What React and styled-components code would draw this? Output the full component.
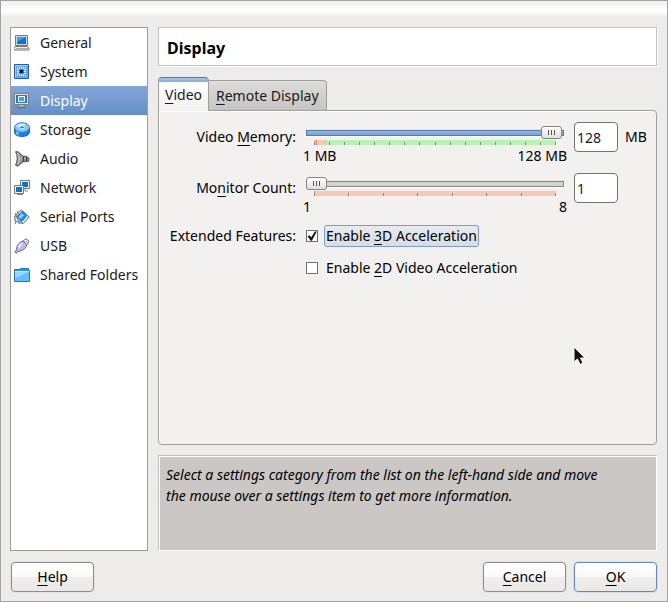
import React, { useState } from 'react';
import styled, { createGlobalStyle } from 'styled-components';

const GlobalStyle = createGlobalStyle`
  *, *::before, *::after { box-sizing: border-box; }
  body { margin: 0; background: #edecea; }
  body, button, input { font: 14px/20px "Noto Sans", "Open Sans", sans-serif; color: #1a1a1a; }
  button { padding: 0; cursor: default; }
`;

const Window = styled.main`
  display: flex;
  flex-direction: column;
  gap: 11px;
  min-height: 100vh;
  padding: 26px 10px 9px 9px;
  border: 1px solid #a3a3a3;
  background: linear-gradient(#f0f0f0, #ffffff 10px, #edecea 16px);
`;

const Body = styled.div`
  flex: 1;
  display: grid;
  grid-template-columns: 138px minmax(0, 1fr);
  gap: 10px;
`;

const Sidebar = styled.nav`
  border: 1px solid #9d9c9a;
  background: #fff;
`;

const Category = styled.button`
  display: flex;
  align-items: center;
  gap: 10px;
  width: 100%;
  height: 29px;
  padding-left: 3px;
  border: 0;
  white-space: nowrap;
  text-align: left;
  color: ${(p) => (p.$active ? '#fff' : '#1a1a1a')};
  background: ${(p) => (p.$active ? 'linear-gradient(#84a6d8, #648fc6)' : 'none')};
`;

const Icon = styled.svg`
  flex: none;
  width: 16px;
  height: 16px;
`;

const Content = styled.div`
  display: flex;
  flex-direction: column;
`;

const Title = styled.h1`
  margin: 0 0 11px;
  padding: 9px 8px 6px;
  border: 1px solid #c2c1c0;
  box-shadow: 1px 1px #fff;
  background: #fff;
  font-size: 16px;
  line-height: 22px;
  color: #000;
`;

const TabList = styled.div`
  display: flex;
  align-items: flex-end;
  height: 33px;
`;

const Tab = styled.button`
  position: relative;
  z-index: ${(p) => (p.$active ? 1 : 0)};
  height: ${(p) => (p.$active ? 34 : 31)}px;
  margin-bottom: -1px;
  padding: 0 ${(p) => (p.$active ? 6 : 7)}px;
  border: 1px solid #a09f9d;
  border-width: ${(p) => (p.$active ? '1px 1px 0' : '1px 1px 1px 0')};
  border-color: ${(p) => (p.$active ? '#5578a5 #a09f9d' : '#a09f9d')};
  border-radius: ${(p) => (p.$active ? '4px 4px 0 0' : '0 4px 0 0')};
  background: ${(p) =>
    p.$active
      ? 'linear-gradient(#a2c1ed 0 1px, #83a7d8 4px, #ffffff 4px, #f2f1ef)'
      : 'linear-gradient(#deddda, #c5c4c1)'};
`;

const Panel = styled.section`
  position: relative;
  flex: 1;
  display: flex;
  flex-direction: column;
  align-items: stretch;
  gap: 10px;
  padding: 11px 9px;
  border: 1px solid #a09f9d;
  border-radius: 0 4px 4px 4px;
  box-shadow: inset 1px 1px #fff;
  background: #f2f1ef;
`;

const SettingRow = styled.div`
  display: grid;
  grid-template-columns: 128px minmax(0, 1fr) 44px 19px;
  gap: 10px;
  height: 41px;
`;

const RowLabel = styled.label`
  padding-top: 5px;
  text-align: right;
  white-space: nowrap;
  color: #000;
`;

const SliderBlock = styled.div`
  display: flex;
  flex-direction: column;
  padding-top: 4px;
`;

const Range = styled.input`
  appearance: none;
  display: block;
  width: 100%;
  height: 14px;
  margin: 0;
  background: none;
  outline: none;

  &::-webkit-slider-runnable-track {
    height: 6px;
    border: 1px solid ${(p) => (p.$filled ? '#587aa5' : '#888884')};
    box-shadow: 0 1px #fff, 0 -1px #e5e4e1;
    background: ${(p) => (p.$filled ? 'linear-gradient(#97b8e6, #789fd2)' : '#d3d3cf')};
  }

  &::-webkit-slider-thumb {
    appearance: none;
    width: 21px;
    height: 13px;
    margin: -5px -1px 0;
    border: 1px solid #858481;
    border-radius: 3px;
    background:
      linear-gradient(#555, #555) 6px 3px / 1px 5px no-repeat,
      linear-gradient(#555, #555) 9px 3px / 1px 5px no-repeat,
      linear-gradient(#555, #555) 12px 3px / 1px 5px no-repeat,
      linear-gradient(#ffffff, #e1e0de);
  }
`;

const Scale = styled.svg`
  display: block;
  flex: none;
  width: calc(100% - 16px);
  height: 5px;
  margin: 0 8px 1px;
  shape-rendering: crispEdges;
`;

const Bounds = styled.div`
  display: flex;
  justify-content: space-between;
  margin: 0 -3px;
  white-space: nowrap;
  color: #000;
`;

const NumberField = styled.input`
  width: 100%;
  height: 30px;
  padding: 0 2px;
  border: 1px solid #737270;
  border-radius: 4px;
  background: #fff;
  outline: none;
`;

const Unit = styled.span`
  margin-left: -3px;
  padding-top: 5px;
  color: #000;
`;

const Features = styled.fieldset`
  display: grid;
  grid-template-columns: 128px minmax(0, 1fr);
  gap: 10px;
  margin: 2px 0 0;
  padding: 0;
  border: 0;
`;

const FeatureName = styled.span`
  text-align: right;
  white-space: nowrap;
  color: #000;
`;

const FeatureList = styled.div`
  display: flex;
  flex-direction: column;
  align-items: flex-start;
  gap: 12px;
`;

const Feature = styled.label`
  display: flex;
  align-items: center;
  gap: 7px;
  height: 20px;
  color: #000;
`;

const Checkbox = styled.input`
  appearance: none;
  display: grid;
  width: 12px;
  height: 12px;
  margin: 0;
  border: 1px solid #6f6e6c;
  background: #fff;
  outline: none;

  &:checked::before {
    content: '';
    background: #1c1c1c;
    clip-path: polygon(5% 52%, 26% 42%, 42% 63%, 78% 5%, 98% 5%, 49% 98%, 36% 98%);
  }
`;

const FeatureText = styled.span`
  padding: 0 1px;
  border-radius: 2px;
  box-shadow: ${(p) => (p.$focused ? '0 0 0 1px #7e9bc2' : 'none')};
  background: ${(p) => (p.$focused ? 'linear-gradient(#e7ebf1, #d5dde7)' : 'none')};
`;

const Hint = styled.p`
  min-height: 96px;
  margin: 10px 0 0;
  padding: 8px 44px 8px 7px;
  border: 1px solid #c0bfbd;
  border-right-color: #fff;
  border-bottom-color: #fff;
  box-shadow: inset 1px 1px #fff;
  background: #cbc7c4;
  font-style: italic;
  line-height: 21px;
  color: #000;
`;

const Footer = styled.footer`
  display: flex;
  gap: 8px;
  padding-left: 1px;
`;

const DialogButton = styled.button`
  width: 83px;
  height: 30px;
  margin-right: ${(p) => (p.$start ? 'auto' : 0)};
  border: 1px solid ${(p) => (p.$primary ? '#648abd' : '#8c8b88')};
  border-radius: 4px;
  box-shadow: 0 0 0 1px ${(p) => (p.$primary ? '#d5dfec' : '#e4e3e1')};
  background: linear-gradient(#ffffff, #f8f8f7 50%, #f0efee 51%, #e9e8e6);
  color: #000;
`;

const Mnemonic = styled.span`
  text-decoration: underline 1px;
  text-underline-offset: 3px;
  text-decoration-skip-ink: none;
`;

const Pointer = styled.svg`
  position: absolute;
  left: 414px;
  top: 235px;
  width: 14px;
  height: 20px;
`;

const icons = {
  General: (
    <>
      <path d="M1.5 .5h12v10h-12z" fill="#d8d8d8" stroke="#777" />
      <path d="M3 2h9v7H3z" fill="#0874d9" />
      <path d="M3 2h9L3 7z" fill="#3ca0f2" />
      <path d="M1.5 11.5h12l1.5 2v1.5H0v-1.5z" fill="#eee" stroke="#777" />
      <path d="M2 13.5h12" stroke="#aaa" />
    </>
  ),
  System: (
    <>
      <path d="M.5 .5h14v14H.5z" fill="#67a8f4" stroke="#2859a5" />
      <path d="M1.5 13.5v-12h12" fill="none" stroke="#a7d0ff" />
      <path d="M5.5 3v2M7.5 3v2M9.5 3v2M5.5 10v2M7.5 10v2M9.5 10v2M3 5.5h2M3 7.5h2M3 9.5h2M10 5.5h2M10 7.5h2M10 9.5h2M3 3.5h1M11 3.5h1M3 11.5h1M11 11.5h1" stroke="#e8f7ff" />
      <path d="M5 5h5v5H5z" fill="#3d83e2" />
      <path d="M6 6h3v3H6z" fill="#00122f" />
    </>
  ),
  Display: (
    <>
      <path d="M.5 .5h14v11h-14z" fill="#e6e6df" stroke="#7b7b78" />
      <path d="M2 2h11v8H2z" fill="#1d78d4" />
      <path d="M4.5 3.5h6v5h-6z" fill="#4e9bea" stroke="#fff" />
      <path d="M5 12h5v2H5z" fill="#bbb" />
      <path d="M3 14.5h9" stroke="#777" strokeWidth="2" />
    </>
  ),
  Storage: (
    <>
      <path d="M.5 6v4c0 6 15 6 15 0V6z" fill="#1683e8" stroke="#2465ac" />
      <path d="M2 9v3l3 1.5V10z" fill="#6bc1ff" />
      <ellipse cx="8" cy="5.5" rx="7.5" ry="4.8" fill="#80c8ff" stroke="#3b7fc2" />
      <path d="M2 4.5c1-3 7-4 10-2L8 5z" fill="#cbedff" />
      <ellipse cx="8" cy="5.3" rx="2.6" ry="1.6" fill="#258be6" stroke="#e4f6ff" />
    </>
  ),
  Audio: (
    <>
      <path d="M1.5 .8 4 .7l5 4.5h3l3 2-.2 3-3 .5H9L4 15.2l-2.5-1C4 9 3.5 4 1.5 .8z" fill="#8b8b8b" stroke="#555" />
      <path d="M3 2c2 4 2 8 0 11.5l2-1C6.5 9 6 5 4 2z" fill="#d3d3d3" />
      <path d="M9.5 5.5v5M12.5 6v4" stroke="#3d3d3d" />
      <path d="M7 5.5v4M11 6.5v2" stroke="#ccc" />
    </>
  ),
  Network: (
    <>
      <path d="M6.5 .5h9v8h-9z" fill="#f5f5f5" stroke="#777" />
      <path d="M8 2h6v5H8z" fill="#0874d1" />
      <path d="M11 9v2h3" fill="none" stroke="#888" />
      <path d="M.5 5.5h9v8h-9z" fill="#f5f5f5" stroke="#777" />
      <path d="M2 7h6v5H2z" fill="#0874d1" />
      <path d="M3 14.5h6" stroke="#888" />
    </>
  ),
  'Serial Ports': (
    <>
      <path d="M7 .8 15.2 8 9 14.8 1 12 .7 7z" fill="#e3e8ed" stroke="#5e7183" />
      <path d="M1 4l4 9M3 2l5 12M9 2l6 6M1 7h4M2 12l-1 3M6 12l-1 3" stroke="#607b94" />
      <path d="M8 2.5 12.5 7 7.5 12.5 3.5 8z" fill="#1b93f0" stroke="#1264ac" />
      <path d="M7.5 4 10 6.5 6 10 4.5 8z" fill="#82d1ff" />
    </>
  ),
  USB: (
    <>
      <path d="M9.5 2.5 12 .7l3 2.5-1.5 3-2 1z" fill="#efeff6" stroke="#68688b" />
      <path d="M9 3 12.8 6.5C12 11 8 13 4 13.5l-2 1.8L.8 14l1.5-2C2.5 8 5 4 9 3z" fill="#b9bce5" stroke="#62628b" />
      <path d="M4 10c.5-3 2-5 5-5L4.5 11z" fill="#f0f1ff" />
      <path d="M12 3l1 1" stroke="#667" />
    </>
  ),
  'Shared Folders': (
    <>
      <path d="M.5 14.5v-12h5l1-1h8v2h1v11z" fill="#2991e8" stroke="#2675bf" />
      <path d="M1 5h14v9H1z" fill="#65bdff" />
      <path d="M1 5h14L1 11z" fill="#9bd8ff" />
      <path d="M1 4.5h14" stroke="#c4eaff" />
    </>
  ),
};

function Ruler({ zones, steps }) {
  return (
    <Scale aria-hidden="true">
      {zones.map((zone) => (
        <rect key={zone.x} x={zone.x} width={zone.width} height="5" fill={zone.fill} />
      ))}
      {Array.from({ length: steps + 1 }, (_, i) => (
        <rect key={i} x={`${(i / steps) * 99.6}%`} y="2" width="1" height="3" fill="#858b80" />
      ))}
    </Scale>
  );
}

const memoryZones = [
  { x: '0', width: '2', fill: '#f4b3aa' },
  { x: '2', width: '1', fill: '#fa8978' },
  { x: '3', width: '8', fill: '#f5c9b5' },
  { x: '11', width: '1', fill: '#d7c68f' },
  { x: '12', width: '100%', fill: '#b7f4b4' },
];

const monitorZones = [
  { x: '0', width: '100%', fill: '#f5c9b5' },
  { x: '0%', width: '1', fill: '#fa8978' },
];

function SliderSetting({ id, name, label, min, max, value, onChange, zones, steps, bounds, unit }) {
  const update = (e) => onChange(Number(e.target.value) || min);
  return (
    <SettingRow>
      <RowLabel htmlFor={id}>{label}</RowLabel>
      <SliderBlock>
        <Range id={id} type="range" min={min} max={max} value={value} onChange={update} $filled={value > min} />
        <Ruler zones={zones} steps={steps} />
        <Bounds>
          <span>{bounds[0]}</span>
          <span>{bounds[1]}</span>
        </Bounds>
      </SliderBlock>
      <NumberField type="text" inputMode="numeric" aria-label={name} value={value} onChange={update} />
      {unit && <Unit>{unit}</Unit>}
    </SettingRow>
  );
}

export default function App() {
  const [category, setCategory] = useState('Display');
  const [tab, setTab] = useState('video');
  const [memory, setMemory] = useState(128);
  const [monitors, setMonitors] = useState(1);

  return (
    <>
      <GlobalStyle />
      <Window>
        <Body>
          <Sidebar aria-label="Settings categories">
            {Object.entries(icons).map(([name, art]) => (
              <Category key={name} type="button" $active={name === category} onClick={() => setCategory(name)}>
                <Icon viewBox="0 0 16 16" aria-hidden="true">{art}</Icon>
                {name}
              </Category>
            ))}
          </Sidebar>
          <Content>
            <Title>{category}</Title>
            <TabList role="tablist">
              <Tab type="button" role="tab" aria-selected={tab === 'video'} $active={tab === 'video'} onClick={() => setTab('video')}>
                <Mnemonic>V</Mnemonic>ideo
              </Tab>
              <Tab type="button" role="tab" aria-selected={tab === 'remote'} $active={tab === 'remote'} onClick={() => setTab('remote')}>
                <Mnemonic>R</Mnemonic>emote Display
              </Tab>
            </TabList>
            <Panel role="tabpanel">
              <SliderSetting
                id="memory"
                name="Video Memory"
                label={<>Video <Mnemonic>M</Mnemonic>emory:</>}
                min={1}
                max={128}
                value={memory}
                onChange={setMemory}
                zones={memoryZones}
                steps={16}
                bounds={['1 MB', '128 MB']}
                unit="MB"
              />
              <SliderSetting
                id="monitors"
                name="Monitor Count"
                label={<>Mo<Mnemonic>n</Mnemonic>itor Count:</>}
                min={1}
                max={8}
                value={monitors}
                onChange={setMonitors}
                zones={monitorZones}
                steps={7}
                bounds={['1', '8']}
              />
              <Features aria-labelledby="features">
                <FeatureName id="features">Extended Features:</FeatureName>
                <FeatureList>
                  <Feature>
                    <Checkbox type="checkbox" defaultChecked />
                    <FeatureText $focused>Enable <Mnemonic>3</Mnemonic>D Acceleration</FeatureText>
                  </Feature>
                  <Feature>
                    <Checkbox type="checkbox" />
                    <FeatureText>Enable <Mnemonic>2</Mnemonic>D Video Acceleration</FeatureText>
                  </Feature>
                </FeatureList>
              </Features>
              <Pointer viewBox="0 0 14 20" aria-hidden="true">
                <path d="M1 1v15l3.5-3 2.5 5.5 3-1.5-2.5-5H12z" fill="#111" stroke="#fff" />
              </Pointer>
            </Panel>
            <Hint>
              Select a settings category from the list on the left-hand side and move the mouse over a settings item to get more information.
            </Hint>
          </Content>
        </Body>
        <Footer>
          <DialogButton type="button" $start><Mnemonic>H</Mnemonic>elp</DialogButton>
          <DialogButton type="button"><Mnemonic>C</Mnemonic>ancel</DialogButton>
          <DialogButton type="button" $primary><Mnemonic>O</Mnemonic>K</DialogButton>
        </Footer>
      </Window>
    </>
  );
}
